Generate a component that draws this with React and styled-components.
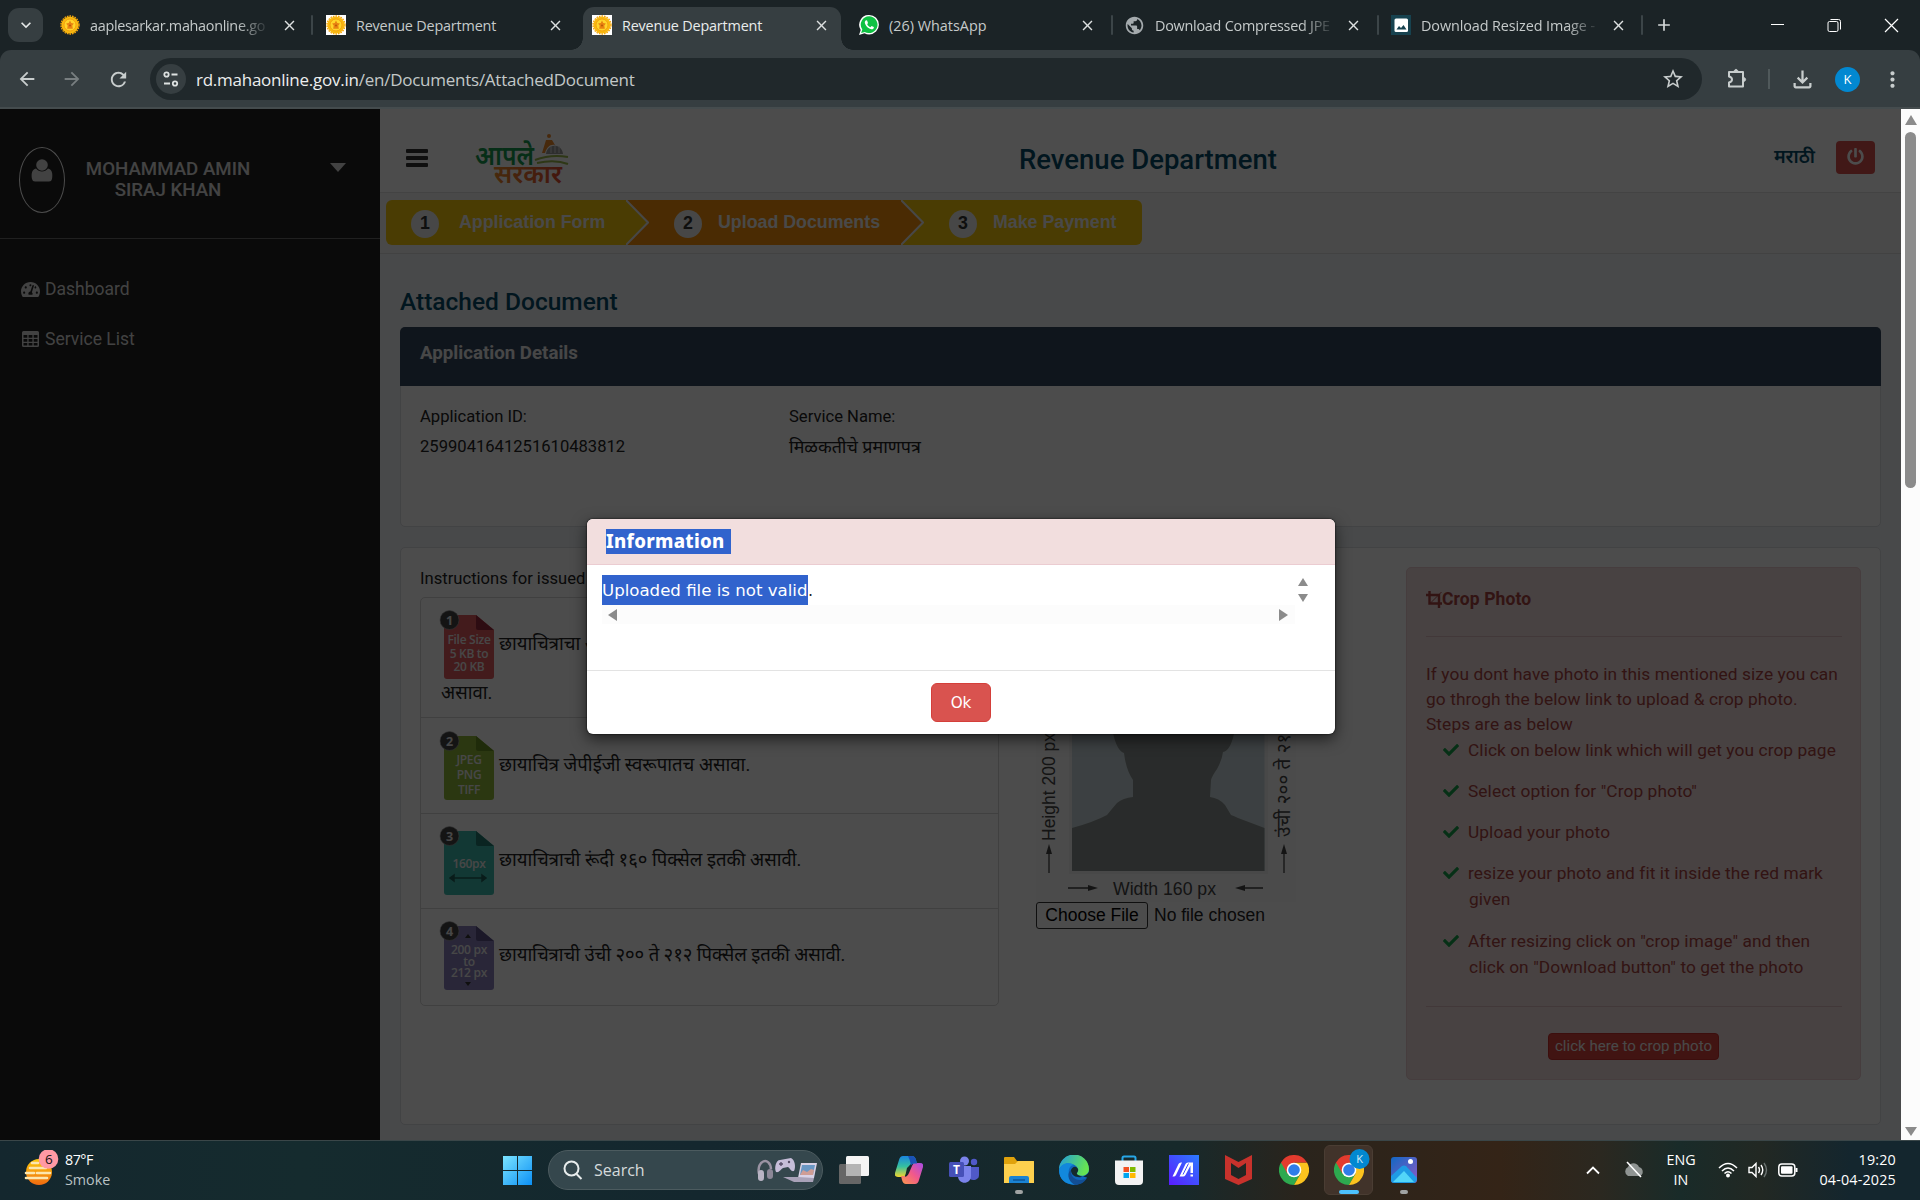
import React from "react";
import styled, { createGlobalStyle, css } from "styled-components";
import {
  MdArrowBack, MdArrowForward, MdRefresh, MdStarBorder,
  MdOutlineFileDownload, MdMoreVert, MdPublic, MdAdd, MdClose, MdKeyboardArrowDown,
} from "react-icons/md";
import { FaCheck, FaPowerOff, FaTachometerAlt } from "react-icons/fa";

const ui = '"Open Sans", "Noto Sans", sans-serif';
const roboto = 'Roboto, "Noto Sans Devanagari", "Lohit Devanagari", "Noto Sans", sans-serif';

const GlobalStyle = createGlobalStyle`
  * { box-sizing: border-box; }
  body { margin: 0; background: #1b2326; overflow: hidden; }
  svg { display: block; flex: none; }
`;

const Screen = styled.div`
  width: 1920px;
  height: 1200px;
  display: flex;
  flex-direction: column;
  overflow: hidden;
  font-family: ${roboto};
`;

/* ---------- browser chrome ---------- */

const TabStrip = styled.div`
  display: flex;
  height: 50px;
  flex: none;
  padding-left: 8px;
  background: #1b2326;
  color: #c5caca;
`;

const TabSearch = styled.div`
  display: flex;
  align-items: center;
  justify-content: center;
  width: 35px;
  height: 34px;
  margin: 8px 8px 0 0;
  border-radius: 11px;
  background: #363e41;
`;

const Tab = styled.div`
  position: relative;
  display: flex;
  align-items: center;
  width: ${(p) => p.$w}px;
  flex: none;
  height: ${(p) => (p.$active ? 43 : 36)}px;
  margin-top: 7px;
  padding: 0 ${(p) => p.$end}px ${(p) => (p.$active ? 7 : 0)}px ${(p) => p.$start}px;
  border-radius: 11px 11px 0 0;
  font: 14.4px ${ui};
  letter-spacing: -0.13px;
  ${(p) => p.$active && css`
    background: #363e41;
    color: #e9ecec;
    &::before, &::after {
      content: "";
      position: absolute;
      bottom: 0;
      width: 12px;
      height: 12px;
    }
    &::before { left: -12px; background: radial-gradient(circle at 0 0, transparent 11.5px, #363e41 12px); }
    &::after { right: -12px; background: radial-gradient(circle at 100% 0, transparent 11.5px, #363e41 12px); }
  `}
`;

const TabTitle = styled.span`
  margin-left: 10px;
  white-space: nowrap;
  letter-spacing: ${(p) => p.$track || 0}px;
  ${(p) => p.$fade && css`mask-image: linear-gradient(90deg, #000 84%, rgba(0, 0, 0, 0.15) 100%);`}
`;

const TabClose = styled.span`
  display: flex;
  justify-content: center;
  width: 18px;
  margin-left: auto;
  color: #dde0e0;
`;

const TabDivider = styled.i`
  width: 2px;
  height: 20px;
  margin: 15px 0 0 -2px;
  border-radius: 1px;
  background: #3c4548;
`;

const NewTab = styled.div`
  margin: 15px auto 0 11px;
  color: #d5d9d9;
`;

const WindowButton = styled.div`
  display: flex;
  align-items: center;
  justify-content: center;
  width: 57px;
  height: 50px;
`;

const Toolbar = styled.div`
  display: flex;
  align-items: center;
  height: 59px;
  flex: none;
  padding: 1px 15px 0 14px;
  background: #363e41;
  border-bottom: 2px solid #454c4e;
  border-radius: 11px 11px 0 0;
  color: #c8cdcd;
`;

const NavIcon = styled.div`
  display: flex;
  justify-content: center;
  flex: none;
  width: 26px;
  margin-right: ${(p) => p.$gap || 0}px;
  opacity: ${(p) => (p.$off ? 0.45 : 1)};
`;

const AddressBar = styled.div`
  display: flex;
  align-items: center;
  flex: none;
  width: 1552px;
  height: 42px;
  margin-right: 22px;
  padding: 0 17px 0 6px;
  border-radius: 21px;
  background: #20282b;
`;

const SiteInfo = styled.div`
  display: flex;
  align-items: center;
  justify-content: center;
  width: 30px;
  height: 30px;
  border-radius: 50%;
  background: #363e41;
`;

const Url = styled.div`
  flex: 1;
  margin: 1px 0 0 10px;
  font: 17px ${ui};
  letter-spacing: -0.25px;
  color: #c3c8c8;
  b { font-weight: 400; color: #eceeee; }
`;

const ToolDivider = styled.i`
  flex: none;
  width: 2px;
  height: 20px;
  margin-right: 19px;
  background: #50595b;
`;

const Profile = styled.div`
  flex: none;
  width: 25px;
  height: 25px;
  margin: 0 20px 0 20px;
  border-radius: 50%;
  background: #0288d1;
  color: #fff;
  font: 13px/25px ${ui};
  text-align: center;
`;

/* ---------- page ---------- */

const Viewport = styled.div`
  position: relative;
  display: flex;
  height: 1031px;
  flex: none;
`;

const Sidebar = styled.aside`
  width: 380px;
  background: #222222;
  color: #fff;
`;

const UserBlock = styled.div`
  display: flex;
  height: 130px;
  padding: 38px 34px 0 19px;
  border-bottom: 1px solid #6c6c6c;
`;

const Avatar = styled.div`
  display: flex;
  justify-content: center;
  width: 46px;
  height: 66px;
  padding-top: 11px;
  border: 1px solid #fff;
  border-radius: 50%;
`;

const UserName = styled.div`
  width: 206px;
  margin-top: 12px;
  font-size: 18.7px;
  font-weight: 500;
  line-height: 21px;
  text-align: center;
  color: #e0e0e0;
`;

const Caret = styled.i`
  margin: 16px 0 0 auto;
  width: 0;
  height: 0;
  border: 8px solid transparent;
  border-top: 9px solid #ddd;
  border-bottom: 0;
`;

const Menu = styled.nav`
  padding: 25px 0 0 21px;
`;

const MenuItem = styled.div`
  display: flex;
  align-items: center;
  gap: 5px;
  height: 50px;
  font-size: 17.5px;
  color: #ddd;
`;

const Main = styled.main`
  width: 1521px;
  background: #f2f4f7;
`;

const Header = styled.header`
  display: flex;
  height: 83px;
  padding: 0 26px 0 26px;
  background: #fff;
`;

const Burger = styled.div`
  display: flex;
  flex-direction: column;
  justify-content: space-between;
  width: 22px;
  height: 18px;
  margin: 40px 47px 0 0;
  i { height: 4px; background: #333; border-radius: 1px; }
`;

const DeptTitle = styled.h1`
  width: 260px;
  margin: 34px 0 0 448px;
  font-size: 27.5px;
  line-height: 34px;
  font-weight: 500;
  white-space: nowrap;
  color: #064b68;
`;

const Language = styled.a`
  margin: 36px 21px 0 auto;
  font-size: 18.5px;
  line-height: 24px;
  font-weight: 600;
  color: #064b68;
`;

const PowerButton = styled.button`
  display: flex;
  align-items: center;
  justify-content: center;
  width: 39px;
  height: 33px;
  margin-top: 32px;
  padding: 0 0 3px;
  border: 0;
  border-radius: 4px;
  background: #d9534f;
  color: #fff;
`;

const StepsBar = styled.div`
  height: 62px;
  padding: 7px 0 0 6px;
  border-top: 1px solid #e2e2e2;
  border-bottom: 1px solid #dedede;
  background: #f6f6f6;
`;

const stepColors = { idle: "#f8c80a", current: "#f8900a" };

const Steps = styled.div`
  display: flex;
  width: 756px;
  height: 45px;
  border-radius: 6px;
  overflow: hidden;
`;

const Step = styled.div`
  display: flex;
  align-items: center;
  flex: none;
  width: ${(p) => p.$w}px;
  height: 45px;
  padding-left: 25px;
  background: ${(p) => stepColors[p.$state]};
  font: 700 17.8px "Liberation Sans", sans-serif;
  white-space: nowrap;
  color: #f4f4f4;
`;

const StepNumber = styled.span`
  width: 28px;
  height: 28px;
  margin: 3px ${(p) => p.$gap || 16}px 0 0;
  border-radius: 50%;
  background: #eee;
  color: #333;
  text-align: center;
  line-height: 27px;
`;

const Content = styled.section`
  padding: 30px 20px 0;
  font-size: 16.6px;
  color: #222;
`;

const PageTitle = styled.h2`
  margin: 0 0 8px;
  font-size: 24.5px;
  font-weight: 500;
  line-height: 35px;
  color: #064b68;
`;

const Card = styled.div`
  height: ${(p) => p.$h}px;
  margin-bottom: 20px;
  border: 1px solid #dcdfe3;
  border-radius: 5px;
  background: #fff;
`;

const CardHeader = styled.div`
  height: 59px;
  margin: -1px -1px 0;
  padding: 14px 20px;
  border-radius: 5px 5px 0 0;
  background: #34465e;
  color: #eee;
  font-size: 18.7px;
  font-weight: 700;
  line-height: 24px;
`;

const Details = styled.div`
  display: grid;
  grid-template-columns: 369px 1fr;
  padding: 16px 19px;
  line-height: 29.5px;
`;

const ServiceName = styled.span`
  font-size: 17.9px;
`;

const Columns = styled.div`
  display: flex;
  align-items: flex-start;
`;

const Instructions = styled.div`
  width: 579px;
  margin: 21px 37px 0 19px;
  line-height: 20px;
`;

const InstructionList = styled.div`
  margin-top: 8px;
  border: 1px solid #d6d6d6;
  border-radius: 5px;
`;

const Instruction = styled.div`
  height: ${(p) => p.$h}px;
  padding: ${(p) => p.$top || 12}px 0 0 20px;
  border-bottom: ${(p) => (p.$last ? 0 : 1)}px solid #d6d6d6;
  font-size: 18.5px;
  letter-spacing: ${(p) => p.$track || 0}px;
  line-height: 32px;
`;

const InstructionRow = styled.div`
  display: flex;
  align-items: center;
  gap: 4px;
  height: 68px;
  margin-bottom: -1px;
  white-space: nowrap;
  svg { align-self: flex-start; overflow: visible; }
`;

const PhotoColumn = styled.div`
  width: 370px;
  padding-top: 52px;
`;

const FileInput = styled.div`
  display: flex;
  align-items: center;
  gap: 6px;
  font: 17.5px "Liberation Sans", sans-serif;
`;

const FileButton = styled.button`
  width: 112px;
  height: 27px;
  padding: 0;
  border: 1px solid #333;
  border-radius: 3px;
  background: #fff;
  font: inherit;
  color: #000;
`;

const CropAlert = styled.div`
  width: 455px;
  height: 513px;
  margin-top: 19px;
  padding: 19px 18px 0 19px;
  border: 1px solid #ebccd1;
  border-radius: 5px;
  background: #f2dcdc;
  color: #a94442;
  font-size: 17.3px;
  line-height: 25px;
  letter-spacing: 0.1px;
  white-space: nowrap;
`;

const CropHeading = styled.div`
  display: flex;
  align-items: center;
  height: 24px;
  font-size: 17.5px;
  font-weight: 700;
`;

const Rule = styled.hr`
  margin: ${(p) => p.$m};
  border: 0;
  border-top: 1px solid #dcbcc0;
`;

const CheckItem = styled.div`
  display: flex;
  gap: 9px;
  height: ${(p) => p.$h}px;
  padding-left: 17px;
  line-height: 26px;
  svg { margin-top: 5px; color: #17a14a; }
  span { padding-left: 1px; text-indent: -1px; }
`;

const CropButton = styled.button`
  display: block;
  width: 171px;
  height: 27px;
  margin: 0 auto 0 122px;
  padding: 0 0 2px;
  border: 1px solid #c9302c;
  border-radius: 4px;
  background: #d9443f;
  color: #f4f4f4;
  font: 15.1px ${roboto};
`;

const Scrollbar = styled.div`
  display: flex;
  flex-direction: column;
  align-items: center;
  width: 19px;
  padding: 6px 0 4px;
  background: #fcfcfc;
`;

const Thumb = styled.div`
  width: 11px;
  height: 356px;
  margin: 7px 0 auto;
  border-radius: 6px;
  background: #8b8b8b;
`;

const Backdrop = styled.div`
  position: absolute;
  inset: 0 19px 0 0;
  background: rgba(0, 0, 0, 0.7);
`;

const Dialog = styled.div`
  position: absolute;
  left: 587px;
  top: 410px;
  width: 748px;
  height: 215px;
  display: flex;
  flex-direction: column;
  border-radius: 6px;
  background: #fff;
  box-shadow: 0 5px 15px rgba(0, 0, 0, 0.6), 0 0 2px #000;
  overflow: hidden;
`;

const DialogHeader = styled.div`
  height: 46px;
  padding: 10px 19px;
  border-bottom: 1px solid #ebccd1;
  background: #f2dede;
  flex: none;
`;

const Selected = styled.span`
  display: inline-block;
  height: ${(p) => p.$h}px;
  width: ${(p) => p.$w}px;
  background: #3163cd;
  color: #fff;
  white-space: nowrap;
  font: ${(p) => (p.$bold ? '800 18.6px/24px "Noto Sans"' : '16.6px/32px "DejaVu Sans"')}, sans-serif;
  letter-spacing: ${(p) => p.$track || 0}px;
`;

const DialogBody = styled.div`
  display: grid;
  grid-template-columns: 693px 16px;
  grid-template-rows: 30px 19px;
  height: 106px;
  padding: 10px 0 0 15px;
  border-bottom: 1px solid #e3e3e3;
  color: #222;
`;

const Message = styled.div`
  display: flex;
  font: 16px/32px "DejaVu Sans", sans-serif;
`;

const VScroll = styled.div`
  display: flex;
  flex-direction: column;
  align-items: center;
  gap: 8px;
  padding-top: 3px;
`;

const HScroll = styled.div`
  display: flex;
  align-items: center;
  justify-content: space-between;
  padding: 0 7px 0 6px;
  background: #fcfcfc;
`;

const Arrow = styled.i`
  width: 0;
  height: 0;
  border: ${(p) => p.$s || 5.5}px solid transparent;
  border-${(p) => p.$from}: ${(p) => p.$l || 8}px solid #8b8b8b;
  border-${(p) => p.$tip}-width: 0;
`;

const DialogFooter = styled.div`
  padding-top: 12px;
`;

const OkButton = styled.button`
  display: block;
  width: 60px;
  height: 39px;
  margin: 0 auto;
  padding: 1px 0 0;
  border: 1px solid #d43f3a;
  border-radius: 6px;
  background: #d9534f;
  color: #fff;
  font: 15.2px "DejaVu Sans", sans-serif;
`;

/* ---------- taskbar ---------- */

const Taskbar = styled.footer`
  display: flex;
  align-items: center;
  height: 60px;
  flex: none;
  padding: 0 24px 1px 24px;
  border-top: 1px solid #3a4648;
  background: linear-gradient(90deg, #14272e 0, #152b2e 300px, #14272e 700px, #17292b 1180px, #2a241c 1300px, #342417 1500px, #2b2820 1600px, #192b29 1680px, #222823 1760px, #14262e 1850px, #14262e 100%);
  color: #fff;
  font: 14.3px/20px ${ui};
`;

const Weather = styled.div`
  display: flex;
  gap: 6px;
  width: 479px;
  height: 41px;
  letter-spacing: -0.5px;
  span { display: block; color: #b9c2c4; letter-spacing: 0; }
`;

const SearchBox = styled.div`
  display: flex;
  align-items: center;
  width: 275px;
  height: 40px;
  margin: 0 3px 0 16px;
  padding: 0 4px 0 14px;
  border: 1px solid #4c5b5f;
  border-radius: 20px;
  background: #35474d;
  color: #d5dbdc;
  font-size: 16px;
  svg:last-child { margin-left: auto; }
  span { margin-left: 11px; }
`;

const AppSlot = styled.div`
  position: relative;
  display: flex;
  align-items: center;
  justify-content: center;
  width: ${(p) => (p.$active ? 49 : 55)}px;
  height: 50px;
  margin: 0 ${(p) => (p.$active ? 3 : 0)}px;
  border-radius: 6px;
  ${(p) => p.$active && css`
    border: 1px solid #4a3d33;
    background: #41332a;
  `}
  ${(p) => p.$run && css`
    &::after {
      content: "";
      position: absolute;
      bottom: ${p.$active ? 0 : 1}px;
      width: ${p.$active ? 20 : 8}px;
      height: 4px;
      border-radius: 2px;
      background: ${p.$active ? "#4cc2ff" : "#a0a3a3"};
    }
  `}
`;

const Tray = styled.div`
  display: flex;
  align-items: center;
  margin-left: auto;
`;

const TrayText = styled.div`
  width: ${(p) => p.$w}px;
  text-align: ${(p) => p.$align};
  margin: 0 ${(p) => p.$r || 0}px 0 ${(p) => p.$l || 0}px;
  letter-spacing: ${(p) => p.$track || 0}px;
`;

/* ---------- drawings ---------- */

const Emblem = ({ boxed }) => (
  <svg width="20" height="20" viewBox="0 0 20 20">
    {boxed && <rect width="20" height="20" fill="#fff" />}
    <circle cx="10" cy="10" r="8.6" fill="#f9b90f" />
    <circle cx="10" cy="10" r="9" fill="none" stroke="#f4a50c" strokeWidth="1.4" strokeDasharray="1.6 1" />
    <circle cx="10" cy="10" r="6" fill="#ffd52a" stroke="#f0980e" strokeWidth=".8" />
    <path d="M10 5.6l1.3 2.4 2.6.4-1.6 2 .5 3.4H7.2l.5-3.4-1.6-2 2.6-.4z" fill="#e98312" />
    <circle cx="10" cy="10.6" r="1" fill="#b95a08" />
  </svg>
);

const WhatsAppMark = () => (
  <svg width="20" height="20" viewBox="0 0 20 20">
    <path d="M10.2 0a9.7 9.7 0 0 1 0 19.4c-1.7 0-3.3-.4-4.7-1.2L0 20l1.7-5.1A9.7 9.7 0 0 1 10.2 0z" fill="#fff" />
    <path d="M10.2 1.3a8.4 8.4 0 1 1-4.4 15.6l-3.7 1.1 1.2-3.5a8.4 8.4 0 0 1 6.9-13.2z" fill="#0fc143" />
    <path d="M7.3 5.2c-1.5.4-1.9 2-1.1 3.9 1.2 2.8 3.5 4.7 6 5.2 1.7.2 2.8-.9 2.7-2.1-.6-.6-1.7-1.1-2.3-1.2l-1.2 1.2c-1.5-.6-2.6-1.7-3.2-3l.8-1.1-.9-2.5z" fill="#fff" />
  </svg>
);

const PictureMark = () => (
  <svg width="20" height="20" viewBox="0 0 20 20">
    <rect width="20" height="20" fill="#17424f" />
    <rect x="3.5" y="3.5" width="13.5" height="13.5" rx="1.5" fill="#fff" />
    <path d="M5.5 14.5l2.5-3.5 2 2 2.5-3 3 4.5z" fill="#17424f" />
  </svg>
);

const Logo = () => (
  <g>
    <defs>
      <linearGradient id="saffron" x1="0" x2="1"><stop offset="0" stopColor="#ee8a2a" /><stop offset="1" stopColor="#e04a30" /></linearGradient>
    </defs>
    <text x="0" y="32" fontSize="27" fontWeight="600" fill="#16994f" textLength="59" lengthAdjust="spacingAndGlyphs">आपले</text>
    <text x="19" y="50" fontSize="25" fontWeight="600" fill="url(#saffron)" textLength="68" lengthAdjust="spacingAndGlyphs">सरकार</text>
    <circle cx="74" cy="3" r="2" fill="#ee8a2a" />
    <path d="M67 20l4-13h6l3 5c-5-1-8 2-10 8z" fill="#ee8a2a" />
    <path d="M71 21c1-11 16-11 17 0z" fill="#999" />
    <path d="M76 13v7M80 12v8M84 13v7" stroke="#ddd" strokeWidth="1" />
    <path d="M60 27q16-6 33-3M62 30q18-4 31 1" stroke="#9ab84a" strokeWidth="2" fill="none" />
  </g>
);

const TableIcon = () => (
  <svg width="19" height="17" viewBox="0 0 19 17">
    <path fillRule="evenodd" fill="currentColor" d="M2.5 0h14a1.5 1.5 0 0 1 1.5 1.5v13a1.5 1.5 0 0 1-1.5 1.500h-14a1.500 1.500 0 0 1-1.500-1.500v-13A1.500 1.500 0 0 1 2.500 0zM2.500 4v2.800h3.800V4zm5.100 0v2.800h3.800V4zm5.100 0v2.800h3.800V4zM2.500 8v2.800h3.800V8zm5.100 0v2.800h3.800V8zm5.100 0v2.800h3.800V8zM2.500 12v2.500h3.800V12zm5.100 0v2.500h3.800V12zm5.100 0v2.500h3.800V12z" />
  </svg>
);

const CropIcon = () => (
  <svg width="16" height="17" viewBox="0 0 16 17" fill="none" stroke="currentColor">
    <path d="M0 4h13v13M3.5 0v12.500H16" strokeWidth="2.400" />
    <path d="M4 12.500L15.500 1" strokeWidth=".9" />
  </svg>
);

const StepEdge = ({ from, to }) => (
  <svg width="23" height="45" viewBox="0 0 23 45">
    <rect width="23" height="45" fill={stepColors[to]} />
    <path d="M0 0l22 22.500L0 45z" fill={stepColors[from]} />
    <path d="M0 0l22 22.500L0 45" fill="none" stroke="#eee" strokeWidth="2" />
  </svg>
);

const FileBadge = ({ n, color, fold, lines, top, step, size = 12, children }) => (
  <svg width="54" height="70" viewBox="0 0 54 70" fontFamily="Open Sans, sans-serif" fontWeight="600">
    <path d="M6 5h29l18 15v46a3 3 0 0 1-3 3H6a3 3 0 0 1-3-3V8a3 3 0 0 1 3-3z" fill={color} />
    <path d="M35 5l18 15H37a2 2 0 0 1-2-2z" fill={fold} />
    <circle cx="8.5" cy="10" r="9.500" fill="#444" stroke="#aaa" strokeWidth=".6" />
    <text x="8.500" y="14.500" fontSize="12.500" fill="#eee" textAnchor="middle" fontWeight="700">{n}</text>
    {lines.map((t, i) => (
      <text key={t} x="28" y={top + i * step} fontSize={size} letterSpacing="-.3" fill="#eee" textAnchor="middle">{t}</text>
    ))}
    {children}
  </svg>
);

const PhotoGuide = () => (
  <svg width="264" height="302" viewBox="1036 600 264 302" fontFamily="Liberation Sans, Noto Sans Devanagari, Lohit Devanagari, sans-serif" fontSize="17.500" fill="#444">
    <rect x="1036" y="600" width="260" height="302" fill="#fafafa" />
    <rect x="1069" y="620" width="199" height="254" fill="#f0f0f0" />
    <rect x="1072" y="623" width="192.500" height="248" fill="#cad8dc" />
    <path d="M1072 871v-43q22-6 35-13 4-5 10-12 6-5 16-6v-17q-7-10-9-27-7-2-11-20V660h121v74q-4 17-11 18-1 8-6 17-5 7-6 11l-1 17q9 1 15 8l6 10q3 1 7 3l26.500 10v43z" fill="#8a918f" />
    <text transform="translate(1055 841) rotate(-90)" textLength="108" lengthAdjust="spacingAndGlyphs">Height 200 px</text>
    <text transform="translate(1290 837) rotate(-90)" fontSize="19">उंची २०० ते २१२ पिक्सेल</text>
    <text x="1113" y="895" textLength="103" lengthAdjust="spacingAndGlyphs">Width 160 px</text>
    <path d="M1049 873v-22M1284 873v-22M1068 888h22M1263 888h-20" stroke="#444" strokeWidth="1.300" />
    <path d="M1049 844l3 10h-6zM1284 844l3 10h-6zM1098 888l-10-3v6zM1235 888l10-3v6z" />
  </svg>
);

const Chrome = () => (
  <svg width="30" height="30" viewBox="0 0 30 30">
    <path d="M15 15L2 7.500A15 15 0 0 0 15 30l6.500-11.300z" fill="#2da94f" />
    <path d="M15 7.500h13A15 15 0 0 1 15 30l6.500-11.300z" fill="#fcc31e" />
    <path d="M2 7.500A15 15 0 0 1 28 7.500H15L8.500 18.700z" fill="#e33b2e" />
    <circle cx="15" cy="15" r="7.300" fill="#fff" />
    <circle cx="15" cy="15" r="5.800" fill="#2f7de9" />
  </svg>
);

const TabItem = ({ w, icon, title, start = 9, end = 11, fade, active, track }) => (
  <Tab $w={w} $active={active} $start={start} $end={end}>
    {icon}
    <TabTitle $fade={fade} $track={track}>{title}</TabTitle>
    <TabClose><MdClose size={17} /></TabClose>
  </Tab>
);

export default function App() {
  return (
    <Screen>
      <GlobalStyle />
      <TabStrip>
        <TabSearch><MdKeyboardArrowDown size={20} color="#e4e7e7" /></TabSearch>
        <TabItem w={262} end={15} icon={<Emblem />} title="aaplesarkar.mahaonline.go" track={-0.3} fade />
        <TabDivider />
        <TabItem w={270} start={13} end={19} icon={<Emblem boxed />} title="Revenue Department" track={-0.18} />
        <TabItem w={258} icon={<Emblem boxed />} title="Revenue Department" track={-0.18} active />
        <TabItem w={272} start={18} end={17} icon={<WhatsAppMark />} title="(26) WhatsApp" />
        <TabDivider />
        <TabItem w={266} start={11} end={17} icon={<MdPublic size={21} color="#a4aaad" />} title="Download Compressed JPE" track={-0.25} fade />
        <TabDivider />
        <TabItem w={264} start={12} end={16} icon={<PictureMark />} title="Download Resized Image -" track={-0.1} fade />
        <TabDivider />
        <NewTab><MdAdd size={20} /></NewTab>
        <WindowButton><svg width="14" height="14"><path d="M0 6.500h13" stroke="#fff" /></svg></WindowButton>
        <WindowButton><svg width="15" height="15" fill="none" stroke="#fff"><rect x="1" y="3.500" width="10" height="10" rx="1.500" /><path d="M3.500 1.500h8a2 2 0 0 1 2 2v8" /></svg></WindowButton>
        <WindowButton><svg width="15" height="15"><path d="M1 1l13 13M14 1L1 14" stroke="#fff" strokeWidth="1.200" /></svg></WindowButton>
      </TabStrip>
      <Toolbar>
        <NavIcon $gap={19}><MdArrowBack size={22} /></NavIcon>
        <NavIcon $gap={20} $off><MdArrowForward size={22} /></NavIcon>
        <NavIcon $gap={19}><MdRefresh size={23} /></NavIcon>
        <AddressBar>
          <SiteInfo>
            <svg width="18" height="18" fill="none" stroke="#dde1e1" strokeWidth="1.800"><circle cx="4.500" cy="4.500" r="2.200" /><path d="M9.500 4.500h6M2 13.500h6" /><circle cx="13" cy="13.500" r="2.200" /></svg>
          </SiteInfo>
          <Url><b>rd.mahaonline.gov.in</b>/en/Documents/AttachedDocument</Url>
          <MdStarBorder size={24} />
        </AddressBar>
        <NavIcon $gap={18}>
          <svg width="24" height="24" viewBox="0 0 24 24" fill="none" stroke="currentColor" strokeWidth="2" strokeLinejoin="round">
            <path d="M4 5h14v14.500H4v-4c2-.4 3-1.400 3-3s-1-2.600-3-3z" />
            <path d="M9 5c0-3.500 4-3.500 4 0zM18 10.500c3.500 0 3.500 4 0 4z" fill="currentColor" strokeWidth="1" />
          </svg>
        </NavIcon>
        <ToolDivider />
        <NavIcon><MdOutlineFileDownload size={27} /></NavIcon>
        <Profile>K</Profile>
        <MdMoreVert size={25} />
      </Toolbar>

      <Viewport>
        <Sidebar>
          <UserBlock>
            <Avatar>
              <svg width="22" height="24" viewBox="0 0 22 24" fill="#ddd"><circle cx="11" cy="6" r="5.800" /><path d="M5 9.500C1 10 0 15 1 20q.5 2.500 3 2.500h14q2.500 0 3-2.500c1-5 0-10-4-10.500-3 4-9 4-12 0z" /></svg>
            </Avatar>
            <UserName>MOHAMMAD AMIN<br />SIRAJ KHAN</UserName>
            <Caret />
          </UserBlock>
          <Menu>
            <MenuItem><FaTachometerAlt size={19} />Dashboard</MenuItem>
            <MenuItem><TableIcon />Service List</MenuItem>
          </Menu>
        </Sidebar>

        <Main>
          <Header>
            <Burger><i /><i /><i /></Burger>
            <svg width="96" height="78" viewBox="0 0 96 78"><g transform="translate(0 24)"><Logo /></g></svg>
            <DeptTitle>Revenue Department</DeptTitle>
            <Language>मराठी</Language>
            <PowerButton><FaPowerOff size={17} /></PowerButton>
          </Header>
          <StepsBar>
            <Steps>
              <Step $w={240} $state="idle"><StepNumber $gap={20}>1</StepNumber>Application Form</Step>
              <StepEdge from="idle" to="current" />
              <Step $w={252} $state="current"><StepNumber>2</StepNumber>Upload Documents</Step>
              <StepEdge from="current" to="idle" />
              <Step $w={218} $state="idle"><StepNumber>3</StepNumber>Make Payment</Step>
            </Steps>
          </StepsBar>
          <Content>
            <PageTitle>Attached Document</PageTitle>
            <Card $h={200}>
              <CardHeader>Application Details</CardHeader>
              <Details>
                <span>Application ID:</span><span>Service Name:</span>
                <span>2599041641251610483812</span><ServiceName>मिळकतीचे प्रमाणपत्र</ServiceName>
              </Details>
            </Card>
            <Card $h={578}>
              <Columns>
                <Instructions>
                  Instructions for issued photo
                  <InstructionList>
                    <Instruction $h={120}>
                      <InstructionRow>
                        <FileBadge n="1" color="#e05a5e" fold="#98283c" lines={["File Size", "5 KB to", "20 KB"]} top={34} step={13.6} />
                        छायाचित्राचा आकार ५ ते २० केबी इतका
                      </InstructionRow>
                      असावा.
                    </Instruction>
                    <Instruction $h={96} $top={13}>
                      <InstructionRow>
                        <FileBadge n="2" color="#8fb83a" fold="#6a8f24" lines={["JPEG", "PNG", "TIFF"]} top={33} step={14.8} />
                        छायाचित्र जेपीईजी स्वरूपातच असावा.
                      </InstructionRow>
                    </Instruction>
                    <Instruction $h={95}>
                      <InstructionRow>
                        <FileBadge n="3" color="#3fbcae" fold="#24796f" lines={["160px"]} top={42} step={14}>
                          <path d="M10 52h34M13 49l-4 3 4 3zM41 49l4 3-4 3z" stroke="#1e5f58" strokeWidth="1.500" fill="#1e5f58" />
                        </FileBadge>
                        छायाचित्राची रूंदी १६० पिक्सेल इतकी असावी.
                      </InstructionRow>
                    </Instruction>
                    <Instruction $h={96} $track={-0.08} $last>
                      <InstructionRow>
                        <FileBadge n="4" color="#8a80bc" fold="#5b5288" lines={["200 px", "to", "212 px"]} top={33} step={11.5}>
                          <path d="M24 17h6l-3-4zM24 61h6l-3 4z" fill="#333" />
                        </FileBadge>
                        छायाचित्राची उंची २०० ते २१२ पिक्सेल इतकी असावी.
                      </InstructionRow>
                    </Instruction>
                  </InstructionList>
                </Instructions>
                <PhotoColumn>
                  <PhotoGuide />
                  <FileInput><FileButton>Choose File</FileButton>No file chosen</FileInput>
                </PhotoColumn>
                <CropAlert>
                  <CropHeading><CropIcon />Crop Photo</CropHeading>
                  <Rule $m="25px 0 25px" />
                  If you dont have photo in this mentioned size you can<br />
                  go throgh the below link to upload &amp; crop photo.<br />
                  Steps are as below
                  <CheckItem $h={41}><FaCheck size={16} /><span>Click on below link which will get you crop page</span></CheckItem>
                  <CheckItem $h={41}><FaCheck size={16} /><span>Select option for "Crop photo"</span></CheckItem>
                  <CheckItem $h={41}><FaCheck size={16} /><span>Upload your photo</span></CheckItem>
                  <CheckItem $h={68}><FaCheck size={16} /><span>resize your photo and fit it inside the red mark<br />given</span></CheckItem>
                  <CheckItem $h={78}><FaCheck size={16} /><span>After resizing click on "crop image" and then<br />click on "Download button" to get the photo</span></CheckItem>
                  <Rule $m="0 0 26px" />
                  <CropButton>click here to crop photo</CropButton>
                </CropAlert>
              </Columns>
            </Card>
          </Content>
        </Main>

        <Scrollbar>
          <Arrow $from="bottom" $tip="top" $s={6} $l={10} />
          <Thumb />
          <Arrow $from="top" $tip="bottom" $s={6} $l={9} />
        </Scrollbar>

        <Backdrop />
        <Dialog>
          <DialogHeader><Selected $bold $h={25} $w={125} $track={0.3}>Information</Selected></DialogHeader>
          <DialogBody>
            <Message><Selected $h={30} $w={206}>Uploaded file is not valid</Selected>.</Message>
            <VScroll>
              <Arrow $from="bottom" $tip="top" />
              <Arrow $from="top" $tip="bottom" />
            </VScroll>
            <HScroll>
              <Arrow $from="right" $tip="left" $s={6} $l={9} />
              <Arrow $from="left" $tip="right" $s={6} $l={9} />
            </HScroll>
          </DialogBody>
          <DialogFooter><OkButton>Ok</OkButton></DialogFooter>
        </Dialog>
      </Viewport>

      <Taskbar>
        <Weather>
          <svg width="35" height="36" viewBox="0 0 35 36">
            <defs><linearGradient id="sun" x1="0" y1="0" x2="0" y2="1"><stop offset="0" stopColor="#fccb0c" /><stop offset="1" stopColor="#f06a10" /></linearGradient></defs>
            <circle cx="15" cy="22" r="13" fill="url(#sun)" />
            <path d="M8 13h6M6 18h16M2 23h8M13 23h13M2 28h21" stroke="#fce6ae" strokeWidth="2.600" strokeLinecap="round" />
            <circle cx="24.500" cy="9" r="9.800" fill="#ff99a4" />
            <text x="24.500" y="14" fontSize="13.500" textAnchor="middle" fill="#111">6</text>
          </svg>
          <div>87°F<span>Smoke</span></div>
        </Weather>
        <svg width="29" height="29" viewBox="0 0 29 29">
          <defs><linearGradient id="win" x1="0" y1="0" x2="1" y2="1"><stop offset="0" stopColor="#7be4ff" /><stop offset="1" stopColor="#0c90f5" /></linearGradient></defs>
          <path d="M0 0h14v14H0zM15 0h14v14H15zM0 15h14v14H0zM15 15h14v14H15z" fill="url(#win)" />
        </svg>
        <SearchBox>
          <svg width="20" height="20" viewBox="0 0 20 20" fill="none" stroke="#e8ecec" strokeWidth="2"><circle cx="8.500" cy="8.500" r="7" /><path d="M13.500 14l5 5" /></svg>
          <span>Search</span>
          <svg width="62" height="28" viewBox="0 0 62 28">
            <path d="M3 18C0 4 14 0 15 13" fill="none" stroke="#9a93a3" strokeWidth="2.500" />
            <rect x="2" y="14" width="6" height="11" rx="3" fill="#b9b4c4" /><rect x="11" y="13" width="6" height="10" rx="3" fill="#8c8797" />
            <path d="M20 16c-2-4 0-12 4-12l11-2c4 2 5 9 3 13-3 1-4-3-6-4l-5 1c-2 1-4 5-7 4z" fill="#c6bdd8" />
            <path d="M23 8h4M25 6v4" stroke="#554c66" strokeWidth="1.300" /><circle cx="33" cy="6" r="1.200" fill="#554c66" />
            <path d="M45 7h16l-3 15H42z" fill="#d9d2e6" /><path d="M46 9h13l-2 10H44z" fill="#6a97c4" /><path d="M44 19l3-5 4 2 4-3 3 1-1 5z" fill="#cf9d95" />
            <path d="M27 21h15l16 1-1 4H38z" fill="#a9a2b8" />
          </svg>
        </SearchBox>
        <AppSlot>
          <svg width="30" height="28"><rect y="8" width="22" height="20" rx="1.500" fill="#666" /><rect x="7" width="23" height="20" rx="1.500" fill="#f4f4f4" /><rect x="7" y="8" width="15" height="12" fill="#b4b4b4" /></svg>
        </AppSlot>
        <AppSlot>
          <svg width="28" height="28" viewBox="0 0 28 28">
            <defs>
              <linearGradient id="cpa" x1="0" y1="0" x2="0" y2="1"><stop offset="0" stopColor="#1a86e0" /><stop offset=".5" stopColor="#35c0a0" /><stop offset="1" stopColor="#f3d52c" /></linearGradient>
              <linearGradient id="cpb" x1="1" y1="0" x2="0" y2="1"><stop offset="0" stopColor="#a74be8" /><stop offset=".5" stopColor="#f2598a" /><stop offset="1" stopColor="#f99a4c" /></linearGradient>
            </defs>
            <path d="M8 0h9q3 0 4 4l1 4h-5q-2 0-3 3l-3 7q-1 3-4 3H3q-4 0-3-4L4 4q1-4 4-4z" fill="url(#cpa)" />
            <path d="M20 28h-9q-3 0-4-4l-1-4h5q2 0 3-3l3-7q1-3 4-3h4q4 0 3 4l-4 13q-1 4-4 4z" fill="url(#cpb)" />
            <path d="M13 0h4q3 0 4 4l1 3.500h-3q-2 0-3 2-1-6-3-9.500z" fill="#1a52b5" />
            <path d="M12 12l4-4-4 12-2 1z" fill="#17292c" />
          </svg>
        </AppSlot>
        <AppSlot>
          <svg width="30" height="28" viewBox="0 0 30 28">
            <circle cx="15.500" cy="5" r="4.500" fill="#7b83eb" /><circle cx="25" cy="6" r="3.200" fill="#5059c9" />
            <path d="M21 11h9v8c0 5-6 6-9 4z" fill="#5059c9" /><path d="M9 10h13v10c0 9-13 9-13 0z" fill="#7b83eb" />
            <rect y="6" width="15" height="15" rx="1.500" fill="#4650b8" />
            <text x="7.500" y="18" fontSize="12" fontWeight="700" textAnchor="middle" fill="#fff">T</text>
          </svg>
        </AppSlot>
        <AppSlot $run>
          <svg width="30" height="28" viewBox="0 0 30 28"><path d="M0 2q0-1 1-1h9l3 4h17v8H0z" fill="#e0a20c" /><path d="M0 8h11l3-3h15q1 0 1 1v21H0z" fill="#fdd04e" /><path d="M5 27v-5q0-2 2-2h16q2 0 2 2v5z" fill="#1a83d3" /><path d="M9 24h12" stroke="#0b4e8d" strokeWidth="1.300" /></svg>
        </AppSlot>
        <AppSlot>
          <svg width="30" height="30" viewBox="0 0 30 30">
            <defs><linearGradient id="edge" x1="0" y1="0" x2="1" y2=".3"><stop offset="0" stopColor="#1f9be0" /><stop offset="1" stopColor="#66e352" /></linearGradient></defs>
            <circle cx="15" cy="15" r="15" fill="#0f66bd" />
            <path d="M0 15A15 15 0 0 1 30 14c0 6-6 8-11 6-3-2 1-3 0-6-3-8-17-6-19 1z" fill="url(#edge)" />
            <path d="M0 15c2-7 10-9 15-5-7 0-8 14 3 19C8 31 0 25 0 15z" fill="#1288dc" />
            <path d="M12 15c-1 8 7 13 16 8-3 5-8 7-12 7-8-4-8-13-4-15z" fill="#124e94" />
            <path d="M19 20c-3-2 1-3 0-6-2-4-6-2-7 1 0 4 3 7 7 7 5 1 9-2 11-5v6l-4-1c-3 0-5-1-7-2z" fill="#152a2c" />
          </svg>
        </AppSlot>
        <AppSlot>
          <svg width="30" height="30" viewBox="0 0 30 30"><path d="M8.500 6V3q0-1.500 1.500-1.500h10q1.500 0 1.500 1.500v3" fill="none" stroke="#27a7e8" strokeWidth="2" /><path d="M1 5.500h28V26q0 4-4 4H5q-4 0-4-4z" fill="#f3f3f3" /><path d="M9.500 12H15v5H9.500z" fill="#f25022" /><path d="M16 12h5.500v5H16z" fill="#7fba00" /><path d="M9.500 18H15v5H9.500z" fill="#00a4ef" /><path d="M16 18h5.500v5H16z" fill="#ffb900" /></svg>
        </AppSlot>
        <AppSlot>
          <svg width="30" height="30" viewBox="0 0 30 30">
            <defs><linearGradient id="asus" x1="1" y1="0" x2="0" y2="1"><stop offset="0" stopColor="#2b7bff" /><stop offset="1" stopColor="#5a1cff" /></linearGradient></defs>
            <rect width="30" height="30" fill="url(#asus)" />
            <path d="M3.500 21.500L9.500 9q.7-1.500 2.500-1.500h1L7 20q-.7 1.500-2.500 1.500zM10.500 21.500L16.500 9q.7-1.500 2.500-1.500h5V18h-2.500v-7.500L16.500 20q-1 1.500-2.500 1.500z" fill="#fff" />
            <path d="M21.500 19.500H24v2h-2.500z" fill="#fff" />
            <path d="M14 19.500l5.500-11" stroke="#3f50ff" strokeWidth="1" />
          </svg>
        </AppSlot>
        <AppSlot>
          <svg width="27" height="30" viewBox="0 0 27 30"><path d="M0 0l13.500 7L27 0v24l-13.500 6L0 24zM6 8v12l7.500 4 7.500-4V8l-7.500 5z" fill="#c8322c" fillRule="evenodd" /></svg>
        </AppSlot>
        <AppSlot><Chrome /></AppSlot>
        <AppSlot $active $run>
          <svg width="44" height="42" viewBox="-7 -6 44 42"><Chrome /><circle cx="25.500" cy="4" r="10" fill="#0288d1" /><text x="25.500" y="8" fontSize="11" textAnchor="middle" fill="#d6ecf8">K</text></svg>
        </AppSlot>
        <AppSlot $run>
          <svg width="26" height="26" viewBox="0 0 26 26">
            <defs><linearGradient id="ph" x1="0" y1="0" x2="1" y2="1"><stop offset="0" stopColor="#1268c4" /><stop offset="1" stopColor="#8c5ac4" /></linearGradient></defs>
            <rect width="26" height="26" rx="3" fill="url(#ph)" /><path d="M0 19L11 9q2-1 4 0l11 12q0 5-4 5H3q-3 0-3-3z" fill="#1e9be4" /><path d="M2 25l11-11 10 11z" fill="#52d6f8" /><circle cx="19.500" cy="4.500" r="2.500" fill="#fff" />
          </svg>
        </AppSlot>
        <Tray>
          <svg width="14" height="9"><path d="M1 7.500L7 1.500l6 6" fill="none" stroke="#fff" strokeWidth="1.800" /></svg>
          <TrayText $l={23} $r={23} $w={20}>
            <svg width="20" height="18" viewBox="0 0 20 18"><path d="M5 15a5 5 0 0 1 0-9c2-5 9-5 11 0 5 1 5 9 0 9z" fill="#8f9492" /><path d="M4 1l14 15" stroke="#fff" strokeWidth="1.600" /></svg>
          </TrayText>
          <TrayText $w={30} $align="center" $r={22}>ENG<br />IN</TrayText>
          <svg width="20" height="16" viewBox="0 0 20 16" fill="none" stroke="#fff" strokeWidth="1.500"><path d="M1 6q9-9 18 0M4 9q6-6 12 0M6.500 11.500q3.500-3.500 7 0" /><circle cx="10" cy="13.500" r="1.200" fill="#fff" /></svg>
          <TrayText $l={10} $r={10} $w={20}>
            <svg width="20" height="16" viewBox="0 0 20 16" fill="none" stroke="#fff" strokeWidth="1.400"><path d="M1 5.500h3l4-4v13l-4-4H1zM10.500 5q2 3 0 6M13 3q3.500 5 0 10" /><path d="M16 1q5 7 0 14" stroke="#6a7270" /></svg>
          </TrayText>
          <svg width="20" height="14"><rect x=".8" y="1" width="16" height="12" rx="3" fill="none" stroke="#fff" strokeWidth="1.500" /><rect x="3" y="3.200" width="11.500" height="7.600" rx="1" fill="#fff" /><path d="M18.500 5v4" stroke="#fff" strokeWidth="2" /></svg>
          <TrayText $w={98} $align="right" $track={0.2}>19:20<br />04-04-2025</TrayText>
        </Tray>
      </Taskbar>
    </Screen>
  );
}
